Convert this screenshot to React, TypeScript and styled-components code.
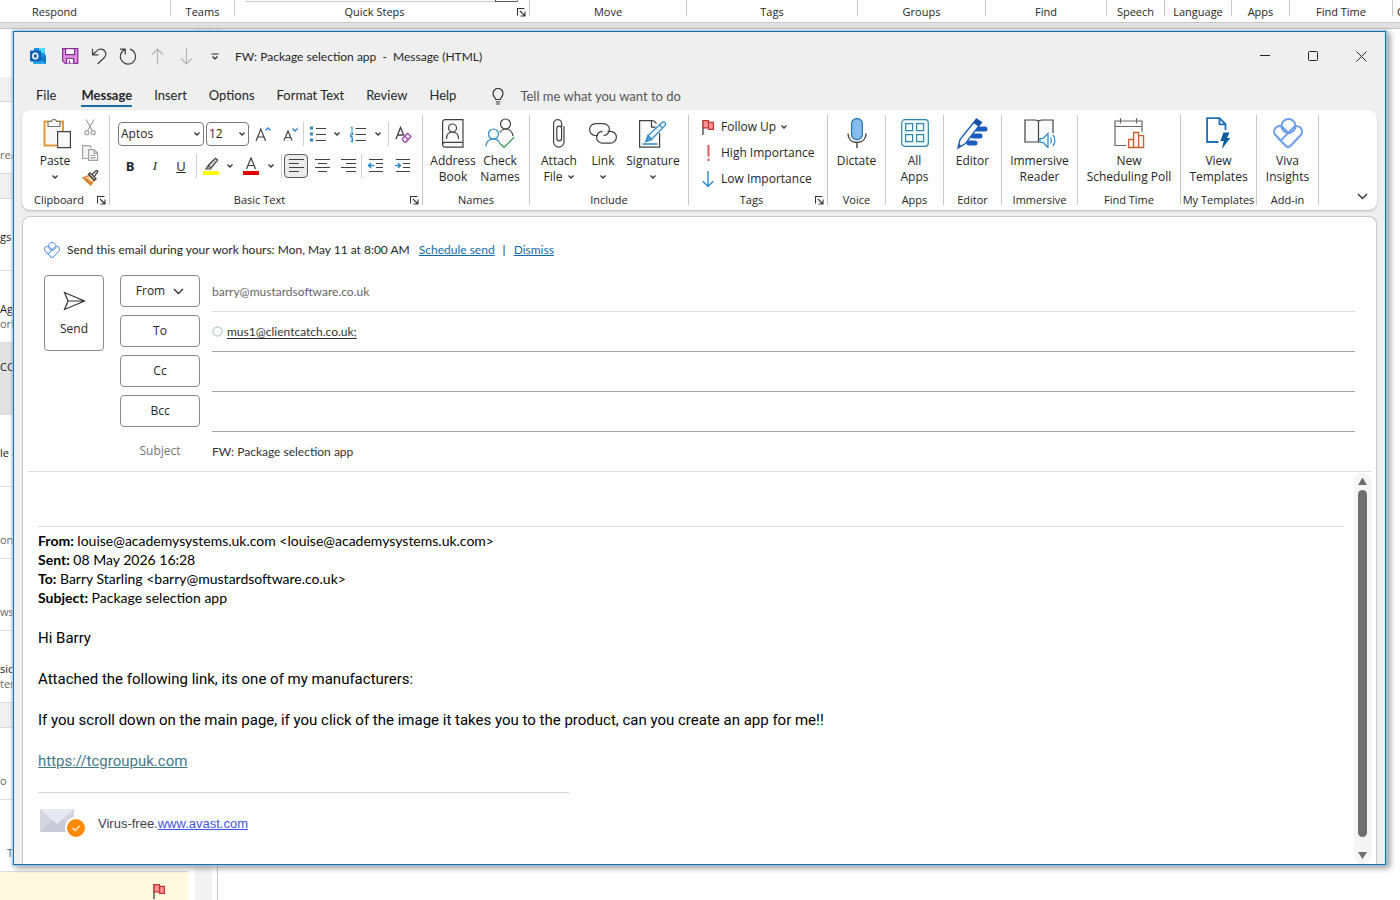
import React from "react";
import styled, { createGlobalStyle } from "styled-components";

const UI = '"Open Sans", "Noto Sans", sans-serif';
const NARROW = 'Lato, "Open Sans", sans-serif';

const GlobalStyle = createGlobalStyle`
  *, *::before, *::after { box-sizing: border-box; }
  body { margin: 0; background: #fff; color: #262626; font-family: ${UI}; font-size: 12px; line-height: 16px; }
  button, input, select { font: inherit; color: inherit; }
  button { padding: 0; border: 0; background: none; cursor: pointer; }
  svg { display: block; flex: none; }
  p { margin: 0; }
`;

/* ---------- Main Outlook window, behind the message ---------- */

const Desktop = styled.div`
  position: relative;
  display: flex;
  flex-direction: column;
  height: 100vh;
  overflow: hidden;
`;

const BackRibbon = styled.div`
  display: flex;
  flex: none;
  height: 23px;
  overflow: hidden;
  border-bottom: 1px solid #c8c8c8;
`;

const BackGroup = styled.div<{ $w: number; $launcher?: boolean }>`
  display: flex;
  flex: none;
  position: relative;
  justify-content: center;
  width: ${(p) => p.$w}px;
  height: 16px;
  padding-top: 4px;
  padding-right: ${(p) => (p.$launcher ? 15 : 0)}px;
  border-right: 1px solid #c8c8c8;
  font-size: 11px;
  white-space: nowrap;

  &:first-child { justify-content: flex-start; padding-left: 32px; }
  &:last-child { justify-content: flex-start; padding-left: 4px; border: 0; }
`;

const Gallery = styled.div`
  position: absolute;
  top: 0;
  left: 10px;
  display: flex;
  width: 273px;
  height: 2px;
  border-bottom: 1px solid #c8c8c8;
  border-radius: 0 0 4px 4px;

  &::after { content: ""; width: 23px; height: 2px; margin-left: auto; border: solid #555; border-width: 0 1px 1px; border-radius: 0 0 4px 0; }
`;

const BackLauncher = styled.button`
  position: absolute;
  right: 3px;
  top: 8px;
`;

const Band = styled.div`
  flex: none;
  height: 6px;
  background: #e1e1e1;
  border-bottom: 1px solid #c4c4c4;
`;

const BackMain = styled.div`
  display: flex;
  flex: 1;
  min-height: 0;
`;

const MailList = styled.div`
  width: 188px;
  padding-top: 48px;
  overflow: hidden;
  color: #666;
`;

const ListHeading = styled.div`
  height: 25px;
  background: #f0f0f0;
  border-bottom: 1px solid #d8d8d8;
`;

const MailItem = styled.div<{ $top?: number; $bg?: string; $indent?: boolean }>`
  display: flex;
  flex-direction: column;
  height: 72px;
  padding: ${(p) => p.$top || 45}px 0 0 ${(p) => (p.$indent ? 7 : 0)}px;
  background: ${(p) => p.$bg || "transparent"};
  border-bottom: 1px solid #dcdcdc;
  font-size: 11px;
  line-height: 15px;
  white-space: nowrap;

  b { color: #1b1b1b; font-weight: 400; }
`;

const FlaggedItem = styled.div`
  display: flex;
  justify-content: flex-end;
  height: 72px;
  padding: 11px 23px 0 0;
  background: #fff9df;
`;

const ListTrack = styled.div`
  width: 17px;
  margin: 0 5px 0 7px;
  background: #f3f3f3;
`;

const ReadingPane = styled.div`
  flex: 1;
  border-left: 1px solid #c8c8c8;
`;

/* ---------- Message window ---------- */

const Window = styled.main`
  position: absolute;
  inset: 31px 14px 35px 13px;
  display: flex;
  flex-direction: column;
  overflow: hidden;
  padding: 0 8px;
  background: #efefef;
  border: 1px solid #1c6ea4;
  box-shadow: 0 0 2px 1px #9bcbe8, 3px 2px 6px 1px rgba(0, 0, 0, 0.4), inset -1px 0 #d2f3fb;
`;

const TitleBar = styled.header`
  display: flex;
  flex: none;
  align-items: center;
  height: 48px;
  margin-right: -8px;
`;

const QuickButton = styled.button<{ $w: number }>`
  display: flex;
  flex: none;
  align-items: center;
  justify-content: center;
  width: ${(p) => p.$w}px;
  height: 32px;
`;

const Title = styled.h1`
  flex: 1;
  margin: 0 0 0 7px;
  padding-top: 2px;
  font-family: ${NARROW};
  font-size: 12px;
  font-weight: 400;
  white-space: pre;
`;

const Tabs = styled.nav`
  display: flex;
  flex: none;
  align-items: center;
  height: 30px;
  padding: 2px 0 0 14px;
  gap: 22px;
  font-family: ${NARROW};
  font-size: 13px;
`;

const Tab = styled.button<{ $on?: boolean }>`
  height: 22px;
  border-bottom: 2px solid ${(p) => (p.$on ? "#1c6ea4" : "transparent")};
  font-weight: ${(p) => (p.$on ? 700 : 400)};
  white-space: nowrap;

  &:first-child { margin-right: 3px; }
`;

const TellMe = styled.label`
  display: flex;
  flex: 1;
  align-items: center;
  gap: 16px;
  margin-left: 14px;

  input { flex: 1; border: 0; padding: 0; background: none; outline: 0; }
  input::placeholder { color: #555; opacity: 1; }
`;

const Ribbon = styled.section`
  display: flex;
  flex: none;
  height: 100px;
  padding-top: 5px;
  background: #fff;
  border-radius: 8px;
  box-shadow: 0 1px 2px rgba(0, 0, 0, 0.25);
`;

const GroupBox = styled.div<{ $w: number }>`
  position: relative;
  display: flex;
  flex: none;
  flex-direction: column;
  width: ${(p) => p.$w}px;
  height: 90px;
  border-right: 1px solid #c8c8c8;
`;

const GroupBody = styled.div`
  display: flex;
  flex: none;
  justify-content: center;
  height: 78px;
`;

const GroupLabel = styled.div<{ $shift?: boolean }>`
  height: 12px;
  padding-right: ${(p) => (p.$shift ? 13 : 0)}px;
  font-size: 11px;
  line-height: 14px;
  text-align: center;
  white-space: nowrap;
`;

const Launcher = styled.button`
  position: absolute;
  right: 3px;
  bottom: 0;
`;

const Big = styled.button<{ $w: number }>`
  display: flex;
  flex: none;
  flex-direction: column;
  align-items: center;
  width: ${(p) => p.$w}px;
  height: 74px;
  padding-top: 2px;
  white-space: nowrap;
`;

const BigIcon = styled.span`
  display: flex;
  align-items: center;
  justify-content: center;
  height: 32px;
  margin-bottom: 4px;
`;

const BigLine = styled.span`
  display: flex;
  align-items: center;
  gap: 4px;
  height: 16px;
`;

const SmallStack = styled.div`
  display: flex;
  flex-direction: column;
  width: 14px;
  margin-right: 7px;
`;

const SmallButton = styled.button`
  display: flex;
  align-items: center;
  justify-content: center;
  height: 25px;
`;

const TextTools = styled.div`
  flex: 1;
  padding: 7px 0 0 8px;
`;

const ToolRow = styled.div`
  display: flex;
  align-items: center;
  height: 24px;
  margin-bottom: 8px;
`;

const SelectBox = styled.span<{ $w: number }>`
  position: relative;
  display: flex;
  align-items: center;
  width: ${(p) => p.$w}px;
  height: 24px;
  margin-right: ${(p) => (p.$w > 50 ? 2 : 0)}px;
  border: 1px solid #7a7a7a;
  border-radius: 4px;

  select { width: 100%; height: 22px; padding: 0 2px; border: 0; background: none; appearance: none; outline: 0; }
  svg { position: absolute; right: 2px; pointer-events: none; }
`;

const Tool = styled.button<{ $w: number; $on?: boolean }>`
  display: flex;
  flex: none;
  align-items: center;
  justify-content: center;
  width: ${(p) => p.$w}px;
  height: 24px;
  border: ${(p) => (p.$on ? "1px solid #5c5c5c" : "0")};
  border-radius: 4px;
  background: ${(p) => (p.$on ? "#ebebeb" : "none")};
`;

const Rule = styled.span<{ $before?: number; $after?: number }>`
  flex: none;
  width: 1px;
  height: 24px;
  margin: 0 ${(p) => p.$after || 0}px 0 ${(p) => p.$before || 0}px;
  background: #d0d0d0;
`;

const Glyph = styled.span<{ $kind: "b" | "i" | "u" }>`
  font-size: 13px;
  font-family: ${(p) => (p.$kind === "i" ? '"Liberation Serif", serif' : "inherit")};
  font-weight: ${(p) => (p.$kind === "b" ? 700 : 400)};
  font-style: ${(p) => (p.$kind === "i" ? "italic" : "normal")};
  text-decoration: ${(p) => (p.$kind === "u" ? "underline" : "none")};
`;

const TagList = styled.div`
  display: flex;
  flex: 1;
  flex-direction: column;
  padding-left: 13px;
`;

const TagButton = styled.button`
  display: flex;
  align-items: center;
  gap: 4px;
  height: 26px;
  padding-bottom: 2px;
  white-space: nowrap;

  > svg:first-child { margin-right: 3px; }
`;

const Collapse = styled.button`
  align-self: flex-end;
  margin: 0 9px 10px auto;
`;

/* ---------- Message card ---------- */

const Card = styled.section`
  display: flex;
  flex: 1;
  flex-direction: column;
  min-height: 0;
  margin-top: 6px;
  background: #fff;
  border: 1px solid #c9c9c9;
  border-bottom: 0;
  border-radius: 8px 8px 0 0;
  font-family: ${NARROW};
`;

const Notice = styled.div`
  display: flex;
  align-items: center;
  gap: 7px;
  padding: 25px 0 0 21px;

  a { color: #0f6cab; }
`;

const NoticeLinks = styled.span`
  display: flex;
  gap: 8px;
  margin-left: 2px;
`;

const Fields = styled.div`
  display: flex;
  align-items: flex-start;
  gap: 16px;
  margin: 0 5px;
  padding: 17px 16px 0;
  border-bottom: 1px solid #dcdcdc;
`;

const outline = `
  border: 1px solid #8a8a8a;
  border-radius: 4px;
  background: #fff;
  font-family: ${UI};
`;

const Send = styled.button`
  display: flex;
  flex: none;
  flex-direction: column;
  align-items: center;
  justify-content: center;
  gap: 10px;
  width: 60px;
  height: 76px;
  padding-top: 2px;
  ${outline}
`;

const Rows = styled.div`
  flex: 1;
`;

const Row = styled.div`
  display: flex;
  gap: 12px;
  height: 40px;

  &:last-child { height: 36px; }
`;

const FieldButton = styled.button`
  display: flex;
  flex: none;
  align-items: center;
  justify-content: center;
  gap: 8px;
  width: 80px;
  height: 32px;
  ${outline}
`;

const FieldLabel = styled.label`
  flex: none;
  width: 80px;
  padding-top: 8px;
  color: #767676;
  font-family: ${UI};
  text-align: center;
`;

const Value = styled.div<{ $line?: string; $color?: string }>`
  display: flex;
  flex: 1;
  align-items: center;
  gap: 4px;
  height: 37px;
  padding-bottom: 3px;
  border-bottom: 1px solid ${(p) => p.$line || "#a6a6a6"};
  color: ${(p) => p.$color || "#333"};

  input { width: 100%; padding: 0; border: 0; outline: 0; background: none; }
`;

const Recipient = styled.a`
  color: #333;
  text-underline-offset: 2px;
`;

const BodyArea = styled.div`
  display: flex;
  flex: 1;
  min-height: 0;
  margin-right: 5px;
`;

const Letter = styled.article`
  flex: 1;
  padding: 54px 10px 0 15px;
  overflow: hidden;
  color: #000;
`;

const Quoted = styled.div`
  padding-top: 4px;
  border-top: 1px solid #dcdcdc;
  font-size: 14px;
  line-height: 19px;
`;

const Para = styled.p`
  margin-top: 21px;
  font-family: Roboto, sans-serif;
  font-size: 15px;
  line-height: 20px;

  a { color: #467886; }
`;

const Signature = styled.div`
  display: flex;
  align-items: center;
  gap: 12px;
  width: 531px;
  margin-top: 21px;
  padding-top: 16px;
  border-top: 1px solid #d3d4de;
  color: #41424e;
  font-family: "Liberation Sans", sans-serif;
  font-size: 13px;
  line-height: 18px;

  a { color: #4453ea; }
`;

const Track = styled.div`
  display: flex;
  flex: none;
  flex-direction: column;
  align-items: center;
  width: 17px;
  margin-top: 1px;
  padding: 4px 0 5px;
  background: #f5f5f5;
  border-radius: 8px;
`;

const Thumb = styled.div`
  flex: 1;
  width: 9px;
  margin: 5px 0 15px;
  background: #6e6e6e;
  border-radius: 5px;
`;

/* ---------- Icons ---------- */

type SvgProps = { w: number; h: number; children: React.ReactNode };
const Svg = ({ w, h, children }: SvgProps) => (
  <svg width={w} height={h} viewBox={`0 0 ${w} ${h}`} fill="none" stroke="#404040" strokeWidth="1.2" aria-hidden="true">
    {children}
  </svg>
);

const Chevron = () => <Svg w={8} h={6}><path d="M1.500 1.500 4 4l2.500-2.500" stroke="#333" strokeWidth="1.300" /></Svg>;
const BigChevron = () => <Svg w={11} h={7}><path d="M1 1l4.500 4.500L10 1" stroke="#333" strokeWidth="1.400" /></Svg>;
const LauncherIcon = () => (
  <Svg w={9} h={9}><path d="M.5 7.500V.5h7M3 3l4.500 4.500M8 3.500V8H3.500" stroke="#333" strokeWidth="1.100" /></Svg>
);

const OutlookLogo = () => (
  <Svg w={17} h={16}>
    <g stroke="none">
      <path d="M4 0h11v9H4z" fill="#1490df" />
      <path d="M4 0h5v5H4z" fill="#1b8fdc" />
      <path d="M9 0h6v5H9z" fill="#50d9ff" />
      <path d="M3 9l13-2v8a1 1 0 0 1-1 1H4a1 1 0 0 1-1-1z" fill="#28a8ea" />
      <path d="M16 7v8.500L8 10z" fill="#0f78d4" />
      <rect x="0" y="2.500" width="11" height="11" rx="1" fill="#0b63b8" />
      <ellipse cx="5.300" cy="8" rx="2.400" ry="2.700" stroke="#fff" strokeWidth="1.600" />
    </g>
  </Svg>
);
const SaveIcon = () => (
  <Svg w={17} h={16}>
    <g stroke="#8b2f97" strokeWidth="1.200">
      <path d="M.6.6h15.200v14.800H3.200L.6 12.800z" fill="#dc8de0" />
      <path d="M3.600.6h9v6h-9z" fill="#fff" />
      <path d="M4.600 15.400V10.500h7v4.900" fill="#fff" /><path d="M7.500 12.500v3" />
    </g>
  </Svg>
);
const UndoIcon = () => <Svg w={16} h={17}><path d="M1.500.8v6h6M1.800 6.500 6 2.600c3-2.600 6.500-1.500 8 .8 1.300 2.200.8 4.700-.8 6.400L6.500 16" /></Svg>;
const RedoIcon = () => <Svg w={18} h={17}><path d="M1 1.200h5.300v5.300M11 1.200A7.600 7.600 0 1 1 6.300 1.400" /></Svg>;
const UpIcon = () => <Svg w={13} h={17}><path d="M6.500 16.500V1M1 6.500 6.500 1 12 6.500" stroke="#b5b5b5" /></Svg>;
const DownIcon = () => <Svg w={13} h={17}><path d="M6.500.5V16M1 10.500 6.500 16l5.500-5.500" stroke="#b5b5b5" /></Svg>;
const CustomizeIcon = () => <Svg w={8} h={7}><path d="M.5 1h7M1.500 3.500 4 6l2.500-2.500" stroke="#222" /></Svg>;
const BulbIcon = () => (
  <Svg w={12} h={17}><path d="M3.800 11.500C3.500 9.500 1 8.500 1 5.500a5 5 0 0 1 10 0c0 3-2.500 4-2.800 6zM3.800 14h4.400M4.300 16h3.400" stroke="#333" /></Svg>
);

const PasteIcon = () => (
  <Svg w={32} h={32}>
    <path d="M5.500 4.500h18.500v24H5.500z" fill="#f8f8f8" stroke="#e39a35" strokeWidth="2" />
    <path d="M9 9.500v-5h3.300a2.800 2.800 0 0 1 5.400 0H21v5z" fill="#fafafa" stroke="#777" />
    <path d="M18.600 14.600h12.800v16H18.600z" fill="#fafafa" stroke="#444" />
  </Svg>
);
const CutIcon = () => (
  <Svg w={12} h={17}><g stroke="#a3a3a3"><path d="M2 .5l6.500 11.500M10 .5 3.500 12" /><circle cx="2.800" cy="13.700" r="2" /><circle cx="9.200" cy="13.700" r="2" /></g></Svg>
);
const CopyIcon = () => (
  <Svg w={17} h={16}><g stroke="#a3a3a3" fill="#f4f4f4"><path d="M6 13.500H.6V.6h7l2 2" /><path d="M6.600 4.600h5.500l3.500 3.500v7.300h-9zM12 4.600v3.700h3.600M8.500 10.500h5M8.500 12.800h5" /></g></Svg>
);
const PainterIcon = () => (
  <Svg w={17} h={16}>
    <path d="M.8 7.500C3 7.500 5 7 7 5.300l5 5c-1 1.700-1.800 3-3.200 4.700z" fill="#fbd9ac" stroke="#d9822b" />
    <path d="M3.500 8.500 10 13.500M2 8.500l6.500 6" stroke="#d9822b" strokeWidth="1.600" />
    <path d="M6.500 4.200 8 2.800l6 6-1.500 1.500zM10 4.800 14 .8c1-.8 2.200.4 1.500 1.400L12 6.800" fill="#fff" strokeWidth="1.300" />
  </Svg>
);
const GrowIcon = () => <Svg w={16} h={17}><path d="M1 15 5.800 3l4.800 12M2.800 11h6" strokeWidth="1.200" /><path d="M10.500 4.500 13 2l2.500 2.500" stroke="#2b88c8" strokeWidth="1.400" /></Svg>;
const ShrinkIcon = () => <Svg w={15} h={15}><path d="M1 13.500 5 4l4 9.500M2.500 10.500h5" strokeWidth="1.200" /><path d="M9.500 1.500 12 4l2.500-2.500" stroke="#2b88c8" strokeWidth="1.400" /></Svg>;
const BulletsIcon = () => (
  <Svg w={16} h={16}><path d="M0 2h3M0 8h3M0 14h3" stroke="#2b88c8" strokeWidth="3" /><path d="M6 2.500h10M6 8.500h10M6 14.500h10" strokeWidth="1" /></Svg>
);
const NumberingIcon = () => (
  <Svg w={16} h={17}>
    <path d="M.8 1.200H2v4M.5 6.800h2v1.700H.7v1.900h2M.5 12h2v3.800h-2M1 14h1.500" stroke="#2b88c8" strokeWidth="1.100" />
    <path d="M5.500 2.500H16M5.500 8.500H16M5.500 14.500H16" strokeWidth="1" />
  </Svg>
);
const ClearIcon = () => (
  <Svg w={17} h={17}><path d="M1 13 5.500 1.500 9 10M2.700 9h5" strokeWidth="1.300" /><path d="M7.500 12.500l5-5 3.500 3-5 5.500H9.500l-2-2zM10 10.500l3 3" stroke="#a33fb0" strokeWidth="1.300" /></Svg>
);
const HighlightIcon = () => (
  <Svg w={17} h={18}><path d="M0 14h16v4H0z" fill="#ff0" stroke="none" /><path d="M6 7.500 12.500 1.200 14.600 3 9 10H6zM6 7.500 3 12h4.500L9 10" fill="#d0d0d0" strokeWidth="1.200" /></Svg>
);
const FontColorIcon = () => (
  <Svg w={16} h={18}><path d="M0 14h16v4H0z" fill="#e00000" stroke="none" /><path d="M3.500 12 8 1l4.500 11M5 8.500h6" strokeWidth="1.200" /></Svg>
);
const AlignIcon = ({ d }: { d: string }) => <Svg w={15} h={14}><path d={d} strokeWidth="1" /></Svg>;
const IndentIcon = ({ right }: { right?: boolean }) => (
  <Svg w={16} h={14}>
    <path d="M1 .5h14M8 4.500h7M8 8.500h7M1 12.500h14" strokeWidth="1" />
    <path d={right ? "M0 6.500h5M3 4l2.500 2.500L3 9" : "M6 6.500H1M3 4 .5 6.500 3 9"} stroke="#2b88c8" strokeWidth="1.400" />
  </Svg>
);
const AddressIcon = () => (
  <Svg w={22} h={29}><path d="M3 .6h18v27.600H3A2.400 2.400 0 0 1 .6 25.600V3A2.400 2.400 0 0 1 3 .6zM.6 25.500c0-1.500 1-2.200 2.400-2.200h18" fill="#fafafa" /><circle cx="10.500" cy="9" r="4" /><path d="M4.500 20c0-4 2-7 6-7s6 3 6 7" /></Svg>
);
const CheckNamesIcon = () => (
  <Svg w={30} h={30}>
    <circle cx="20.500" cy="6" r="5" /><path d="M15 14.500c1.500-2.500 3.500-3.500 5.500-3.500 4 0 7 3 7.500 7" />
    <g stroke="#2b88c8"><circle cx="8.500" cy="16" r="5" /><path d="M.8 28.500c.5-5 3.500-7.500 7.700-7.500 2.500 0 4.500 1 5.700 3" /></g>
    <path d="M14 24.500l5 5L29.300 19" stroke="#3f9b5a" strokeWidth="1.300" />
  </Svg>
);
const ClipIcon = () => (
  <Svg w={12} h={29}><path d="M8.600 9v10.500a2.400 2.400 0 0 1-4.800 0V9.500a2.400 2.400 0 0 1 4.800 0M8.600 8V4.300a3.700 3.700 0 0 0-8 .7v18a5 5 0 0 0 10.400 0V7" /></Svg>
);
const LinkIcon = () => (
  <Svg w={28} h={21}><path d="M9 12.500H6.500a5.900 5.900 0 0 1 0-11.800h8a5.900 5.900 0 0 1 0 11.800M18.500 8.300h3a5.900 5.900 0 0 1 0 11.800h-8a5.900 5.900 0 0 1 0-11.800" /></Svg>
);
const SignatureIcon = () => (
  <Svg w={28} h={29}>
    <path d="M14.500 1.600H.6v26.500h20V14M12.500 1.600v6.500h4" fill="#fafafa" /><path d="M14.500 1.600l3 3" />
    <g stroke="#2b88c8"><path d="M3.500 25h15" strokeWidth="1.500" /><path d="M7 22.500l2-6L23 3.500c1.200-1 2.200-.6 3 .2s1 2 0 3L12.500 20.500zM20.500 6l3.200 3.200" fill="#e9f4fc" /><path d="M7 22.500l2-6 3.500 4z" fill="#5aa9e0" /></g>
  </Svg>
);
const FlagIcon = () => (
  <Svg w={12} h={17}><path d="M1 1v15" strokeWidth="1.300" /><path d="M1 1.600h5.500v1.800h4.900v7H6.500V8.800H1z" fill="#ff9191" stroke="#c13535" /><path d="M6.500 3.400v5.400" stroke="#c13535" /></Svg>
);
const HighIcon = () => <Svg w={12} h={17}><path d="M6.500 0v11.500M6.500 13.500V16" stroke="#e0585d" strokeWidth="2" /></Svg>;
const LowIcon = () => <Svg w={12} h={17}><path d="M6 0v15.500M.8 10.300 6 15.500l5.200-5.200" stroke="#2b88c8" strokeWidth="1.400" /></Svg>;
const MicIcon = () => (
  <Svg w={20} h={30}><rect x="4.600" y=".6" width="10.800" height="21" rx="5" fill="#86bdeb" stroke="#2473b0" /><path d="M1 15.500c0 5.500 3.500 9 9 9s9-3.500 9-9M10 24.500V30" strokeWidth="1.400" /></Svg>
);
const AppsIcon = () => (
  <Svg w={28} h={28}><g stroke="#2b88a8"><rect x=".7" y=".7" width="26.600" height="26.600" rx="3" fill="#f5fcff" /><path d="M4.600 4.600h7v7h-7zM15.600 4.600h7v7h-7zM4.600 15.600h7v7h-7zM15.600 15.600h7v7h-7z" /></g></Svg>
);
const EditorIcon = () => (
  <Svg w={31} h={31}>
    <path d="M20 11h8M16 18h7M12 25h6" stroke="#1a5dbe" strokeWidth="5" strokeLinecap="round" />
    <path d="M19.500 1l5 3.500L8.500 25.500 1 30l2-8.500z" fill="#fff" stroke="#1a5dbe" strokeWidth="1.400" />
    <path d="M19.500 1l5 3.500-3 4-5-3.500zM1 30l1-4 2.500 2z" fill="#1a4fa8" stroke="none" />
  </Svg>
);
const ReaderIcon = () => (
  <Svg w={32} h={30}>
    <path d="M14.500 24H1V2h10c2 0 3.500.6 3.500 2.500zM14.500 24V4.500C14.500 2.600 16 2 18 2h11v13" fill="#fafafa" />
    <path d="M16 20.500h3l5-5v14l-5-5h-3z" fill="#e9f7ff" stroke="#2b88c8" /><path d="M26.500 19.500c1.200 1.500 1.200 4.500 0 6M29 17c2.500 3 2.500 8 0 11" stroke="#2b88c8" />
  </Svg>
);
const PollIcon = () => (
  <Svg w={31} h={31}>
    <path d="M12 27.500H1V3h27v11M1 8.500h27M6.500 0v5.500M22.500 0v5.500" stroke="#666" />
    <path d="M14.600 29.500v-8h5v8zM19.600 29.500v-15h5v15zM24.600 29.500V17.600h5v11.900z" fill="#fff6ef" stroke="#c8602f" strokeWidth="1.300" />
  </Svg>
);
const TemplateIcon = () => (
  <Svg w={25} h={32}>
    <path d="M12.500 25H1.100V1.100h12.400l6 6V13M13.500 1.500v5.800h6" stroke="#1d6fb8" strokeWidth="1.800" />
    <path d="M17.500 15.500h6l-2.500 5.500h3.300l-8.500 11 2-8h-3.500z" fill="#0d5c9e" stroke="none" />
  </Svg>
);
const VivaIcon = ({ size = 30 }: { size?: number }) => (
  <svg width={size} height={size} viewBox="0 0 30 30" fill="none" stroke="#6a9cec" strokeWidth="1.900" strokeLinejoin="round" aria-hidden="true">
    <circle cx="15.500" cy="8" r="7" />
    <path d="M8.500 8.500c-2-.8-4-.3-5.300 1l-.7.700a5 5 0 0 0 0 6.800L12.800 28a3.300 3.300 0 0 0 4.600 0L27.800 17a5 5 0 0 0 0-6.800l-.7-.7a4.700 4.700 0 0 0-4.600-1.200" />
    <path d="M22.500 8.300c-1 .2-1.600.7-2.300 1.400L9.500 20.800a2.600 2.600 0 0 1-3.800 0M8.500 8.500c.8.300 1.400.700 2 1.300l6 6" />
  </svg>
);
const SendIcon = () => <Svg w={23} h={20}><path d="M1.500 1.500 21.500 10l-20 8.500L5 10zM5 10h16" stroke="#333" /></Svg>;
const MailCheck = () => (
  <Svg w={48} h={30}>
    <g stroke="none"><path d="M2 0h34v23H2z" fill="#d5d5e1" /><path d="M2 0h34L19 15z" fill="#e8e8f0" /><path d="M2 23l12-12 5 4 5-4 12 12z" fill="#c9c9d8" /><circle cx="38" cy="19" r="11" fill="#fff" /><circle cx="38" cy="19" r="9" fill="#ff8a05" /></g>
    <path d="M34.500 19l2.700 2.500 4.300-4.500" stroke="#ffe6c2" strokeWidth="1.600" />
  </Svg>
);

/* ---------- Composed pieces ---------- */

type GroupProps = { label: string; w: number; launcher?: boolean; children: React.ReactNode };
const Group = ({ label, w, launcher, children }: GroupProps) => (
  <GroupBox $w={w}>
    <GroupBody>{children}</GroupBody>
    <GroupLabel $shift={launcher}>{label}</GroupLabel>
    {launcher && <Launcher aria-label={`${label} settings`}><LauncherIcon /></Launcher>}
  </GroupBox>
);

type BigProps = { icon: React.ReactNode; lines: string[]; w: number; menu?: "inline" | "below" };
const BigButton = ({ icon, lines, w, menu }: BigProps) => (
  <Big $w={w}>
    <BigIcon>{icon}</BigIcon>
    {lines.map((line, i) => (
      <BigLine key={line}>
        {line}
        {menu === "inline" && i === lines.length - 1 && <Chevron />}
      </BigLine>
    ))}
    {menu === "below" && <BigLine><Chevron /></BigLine>}
  </Big>
);

const backGroups: [string, number][] = [
  ["Respond", 171], ["Teams", 64], ["Quick Steps", 295], ["Move", 157], ["Tags", 171], ["Groups", 128],
  ["Find", 121], ["Speech", 58], ["Language", 67], ["Apps", 58], ["Find Time", 103], ["C", 60],
];

export default function App() {
  return (
    <Desktop>
      <GlobalStyle />
      <BackRibbon>
        {backGroups.map(([name, w]) => (
          <BackGroup key={name} $w={w} $launcher={name === "Quick Steps"}>
            {name === "Quick Steps" && <Gallery />}
            {name}
            {name === "Quick Steps" && <BackLauncher aria-label="Quick Steps settings"><LauncherIcon /></BackLauncher>}
          </BackGroup>
        ))}
      </BackRibbon>
      <Band />
      <BackMain>
        <MailList>
          <ListHeading />
          <MailItem>re/</MailItem>
          <ListHeading />
          <MailItem $top={30}><b>gs a</b></MailItem>
          <MailItem $top={30}><b>Age</b>ork</MailItem>
          <MailItem $top={16} $bg="#e1e1e1"><b>CC</b></MailItem>
          <MailItem $top={30}><b>le -</b></MailItem>
          <MailItem>ons</MailItem>
          <MailItem>ws A</MailItem>
          <MailItem $top={30}><b>sic</b>ten</MailItem>
          <ListHeading />
          <MailItem>o</MailItem>
          <MailItem $indent>T</MailItem>
          <FlaggedItem><FlagIcon /></FlaggedItem>
        </MailList>
        <ListTrack />
        <ReadingPane />
      </BackMain>

      <Window>
        <TitleBar>
          <QuickButton $w={32} aria-label="Outlook"><OutlookLogo /></QuickButton>
          <QuickButton $w={32} aria-label="Save"><SaveIcon /></QuickButton>
          <QuickButton $w={26} aria-label="Undo"><UndoIcon /></QuickButton>
          <QuickButton $w={32} aria-label="Redo"><RedoIcon /></QuickButton>
          <QuickButton $w={26} aria-label="Previous item"><UpIcon /></QuickButton>
          <QuickButton $w={32} aria-label="Next item"><DownIcon /></QuickButton>
          <QuickButton $w={26} aria-label="Customize toolbar"><CustomizeIcon /></QuickButton>
          <Title>{"FW: Package selection app  -  Message (HTML)"}</Title>
          <QuickButton $w={48} aria-label="Minimize"><Svg w={10} h={10}><path d="M0 4.500h10" stroke="#222" strokeWidth="1" /></Svg></QuickButton>
          <QuickButton $w={48} aria-label="Maximize"><Svg w={10} h={10}><rect x=".5" y=".5" width="9" height="9" rx="1" stroke="#222" strokeWidth="1" /></Svg></QuickButton>
          <QuickButton $w={48} aria-label="Close"><Svg w={11} h={11}><path d="M.5.5l10 10M10.500.5l-10 10" stroke="#222" strokeWidth="1" /></Svg></QuickButton>
        </TitleBar>

        <Tabs>
          <Tab>File</Tab>
          <Tab $on>Message</Tab>
          <Tab>Insert</Tab>
          <Tab>Options</Tab>
          <Tab>Format Text</Tab>
          <Tab>Review</Tab>
          <Tab>Help</Tab>
          <TellMe><BulbIcon /><input aria-label="Tell me" placeholder="Tell me what you want to do" /></TellMe>
        </Tabs>

        <Ribbon>
          <Group label="Clipboard" w={88} launcher>
            <BigButton w={56} icon={<PasteIcon />} lines={["Paste"]} menu="below" />
            <SmallStack>
              <SmallButton aria-label="Cut"><CutIcon /></SmallButton>
              <SmallButton aria-label="Copy"><CopyIcon /></SmallButton>
              <SmallButton aria-label="Format painter"><PainterIcon /></SmallButton>
            </SmallStack>
          </Group>
          <Group label="Basic Text" w={313} launcher>
            <TextTools>
              <ToolRow>
                <SelectBox $w={86}><select aria-label="Font"><option>Aptos</option></select><Chevron /></SelectBox>
                <SelectBox $w={43}><select aria-label="Font size"><option>12</option></select><Chevron /></SelectBox>
                <Tool $w={28} aria-label="Grow font"><GrowIcon /></Tool>
                <Tool $w={26} aria-label="Shrink font"><ShrinkIcon /></Tool>
                <Rule />
                <Tool $w={28} aria-label="Bullets"><BulletsIcon /></Tool>
                <Tool $w={10} aria-label="Bullet styles"><Chevron /></Tool>
                <Tool $w={32} aria-label="Numbering"><NumberingIcon /></Tool>
                <Tool $w={8} aria-label="Numbering styles"><Chevron /></Tool>
                <Rule $before={6} />
                <Tool $w={28} aria-label="Clear formatting"><ClearIcon /></Tool>
              </ToolRow>
              <ToolRow>
                <Tool $w={24} aria-label="Bold"><Glyph $kind="b">B</Glyph></Tool>
                <Tool $w={26} aria-label="Italic"><Glyph $kind="i">I</Glyph></Tool>
                <Tool $w={26} aria-label="Underline"><Glyph $kind="u">U</Glyph></Tool>
                <Rule $before={2} />
                <Tool $w={28} aria-label="Highlight"><HighlightIcon /></Tool>
                <Tool $w={10} aria-label="Highlight colors"><Chevron /></Tool>
                <Tool $w={32} aria-label="Font color"><FontColorIcon /></Tool>
                <Tool $w={8} aria-label="Font colors"><Chevron /></Tool>
                <Rule $before={6} $after={2} />
                <Tool $w={24} $on aria-label="Align left"><AlignIcon d="M0 .5h15M0 4.500h10M0 8.500h15M0 12.500h10" /></Tool>
                <Tool $w={28} aria-label="Center"><AlignIcon d="M0 .5h15M3 4.500h9M0 8.500h15M3 12.500h9" /></Tool>
                <Tool $w={25} aria-label="Align right"><AlignIcon d="M0 .5h15M5 4.500h10M0 8.500h15M5 12.500h10" /></Tool>
                <Rule />
                <Tool $w={28} aria-label="Decrease indent"><IndentIcon /></Tool>
                <Tool $w={26} aria-label="Increase indent"><IndentIcon right /></Tool>
              </ToolRow>
            </TextTools>
          </Group>
          <Group label="Names" w={107}>
            <BigButton w={48} icon={<AddressIcon />} lines={["Address", "Book"]} />
            <BigButton w={46} icon={<CheckNamesIcon />} lines={["Check", "Names"]} />
          </Group>
          <Group label="Include" w={159}>
            <BigButton w={46} icon={<ClipIcon />} lines={["Attach", "File"]} menu="inline" />
            <BigButton w={42} icon={<LinkIcon />} lines={["Link"]} menu="below" />
            <BigButton w={58} icon={<SignatureIcon />} lines={["Signature"]} menu="below" />
          </Group>
          <Group label="Tags" w={139} launcher>
            <TagList>
              <TagButton><FlagIcon />Follow Up<Chevron /></TagButton>
              <TagButton><HighIcon />High Importance</TagButton>
              <TagButton><LowIcon />Low Importance</TagButton>
            </TagList>
          </Group>
          <Group label="Voice" w={58}><BigButton w={50} icon={<MicIcon />} lines={["Dictate"]} /></Group>
          <Group label="Apps" w={58}><BigButton w={50} icon={<AppsIcon />} lines={["All", "Apps"]} /></Group>
          <Group label="Editor" w={58}><BigButton w={50} icon={<EditorIcon />} lines={["Editor"]} /></Group>
          <Group label="Immersive" w={76}><BigButton w={70} icon={<ReaderIcon />} lines={["Immersive", "Reader"]} /></Group>
          <Group label="Find Time" w={103}><BigButton w={96} icon={<PollIcon />} lines={["New", "Scheduling Poll"]} /></Group>
          <Group label="My Templates" w={76}><BigButton w={70} icon={<TemplateIcon />} lines={["View", "Templates"]} /></Group>
          <Group label="Add-in" w={62}><BigButton w={56} icon={<VivaIcon />} lines={["Viva", "Insights"]} /></Group>
          <Collapse aria-label="Collapse ribbon"><BigChevron /></Collapse>
        </Ribbon>

        <Card>
          <Notice>
            <VivaIcon size={16} />
            <span>Send this email during your work hours: Mon, May 11 at 8:00 AM</span>
            <NoticeLinks><a href="#schedule">Schedule send</a><span>|</span><a href="#dismiss">Dismiss</a></NoticeLinks>
          </Notice>
          <Fields>
            <Send><SendIcon />Send</Send>
            <Rows>
              <Row><FieldButton>From <BigChevron /></FieldButton><Value $line="#dcdcdc" $color="#666"><input aria-label="From" defaultValue="barry@mustardsoftware.co.uk" /></Value></Row>
              <Row>
                <FieldButton>To</FieldButton>
                <Value>
                  <Svg w={11} h={11}><circle cx="5.500" cy="5.500" r="4.600" stroke="#9fb8bd" strokeWidth="1" /></Svg>
                  <Recipient href="#recipient">mus1@clientcatch.co.uk;</Recipient>
                </Value>
              </Row>
              <Row><FieldButton>Cc</FieldButton><Value><input aria-label="Cc" /></Value></Row>
              <Row><FieldButton>Bcc</FieldButton><Value><input aria-label="Bcc" /></Value></Row>
              <Row><FieldLabel htmlFor="subject">Subject</FieldLabel><Value $line="transparent"><input id="subject" defaultValue="FW: Package selection app" /></Value></Row>
            </Rows>
          </Fields>
          <BodyArea>
            <Letter>
              <Quoted>
                <p><b>From:</b> louise@academysystems.uk.com &lt;louise@academysystems.uk.com&gt;</p>
                <p><b>Sent:</b> 08 May 2026 16:28</p>
                <p><b>To:</b> Barry Starling &lt;barry@mustardsoftware.co.uk&gt;</p>
                <p><b>Subject:</b> Package selection app</p>
              </Quoted>
              <Para>Hi Barry</Para>
              <Para>Attached the following link, its one of my manufacturers:</Para>
              <Para>If you scroll down on the main page, if you click of the image it takes you to the product, can you create an app for me!!</Para>
              <Para><a href="https://tcgroupuk.com">https://tcgroupuk.com</a></Para>
              <Signature>
                <MailCheck />
                <span>Virus-free.<a href="https://www.avast.com">www.avast.com</a></span>
              </Signature>
            </Letter>
            <Track>
              <Svg w={9} h={8}><path d="M4.500 0.500 9 8H0z" fill="#6e6e6e" stroke="none" /></Svg>
              <Thumb />
              <Svg w={9} h={7}><path d="M4.500 7 9 0H0z" fill="#6e6e6e" stroke="none" /></Svg>
            </Track>
          </BodyArea>
        </Card>
      </Window>
    </Desktop>
  );
}
